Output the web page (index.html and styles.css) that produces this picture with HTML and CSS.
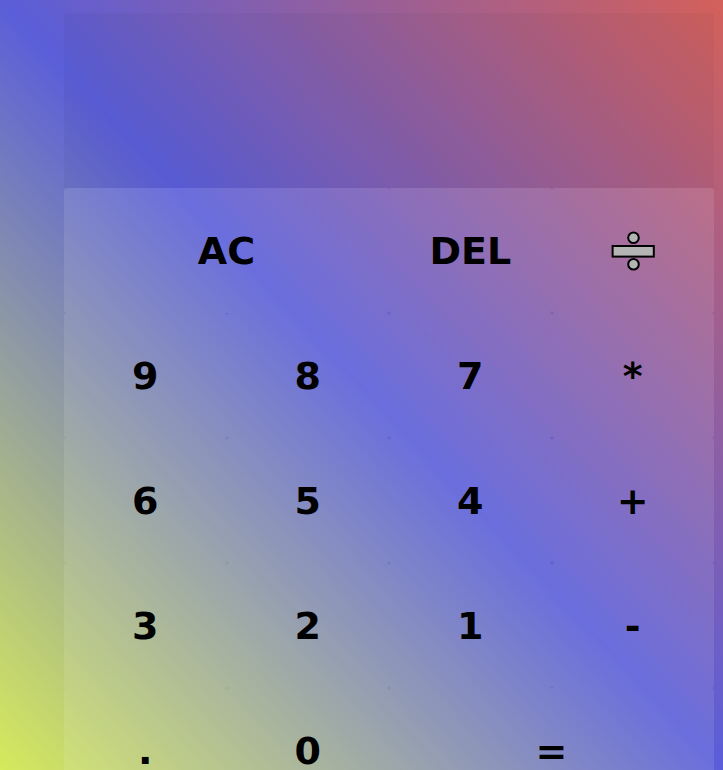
FILE: index.html
```html
<!DOCTYPE html>
<html lang="en">
<head>
<meta charset="utf-8">
<title>Calculator</title>
<link rel="stylesheet" href="styles.css">
</head>
<body>
<div class="calculator">
  <div class="output">
    <div class="previous-operand"></div>
    <div class="current-operand"></div>
  </div>
  <div class="keys">
    <button class="key span-two">AC</button>
    <button class="key">DEL</button>
    <button class="key" aria-label="divide">
      <svg class="divide-icon" width="44" height="40" viewBox="0 0 44 40" aria-hidden="true">
        <circle cx="22.5" cy="6.8" r="5.3" fill="#b4b4b4" stroke="#000" stroke-width="2"/>
        <rect x="1.6" y="15" width="41.2" height="10.6" fill="#b4b4b4" stroke="#000" stroke-width="2"/>
        <circle cx="22.5" cy="33.3" r="5.3" fill="#b4b4b4" stroke="#000" stroke-width="2"/>
      </svg>
    </button>
    <button class="key">9</button>
    <button class="key">8</button>
    <button class="key">7</button>
    <button class="key">*</button>
    <button class="key">6</button>
    <button class="key">5</button>
    <button class="key">4</button>
    <button class="key">+</button>
    <button class="key">3</button>
    <button class="key">2</button>
    <button class="key">1</button>
    <button class="key">-</button>
    <button class="key">.</button>
    <button class="key">0</button>
    <button class="key span-two">=</button>
  </div>
</div>
</body>
</html>
```
FILE: styles.css
```css
html {
  height: 100%;
}

body {
  margin: 0;
  padding: 13px 9px 0 64px;
  background: linear-gradient(to top right, #d6ea5c 0%, #5a5ed9 50%, #d4605a 100%);
  font-family: "DejaVu Sans", Verdana, sans-serif;
}

.calculator {
  width: 650px;
  display: flex;
  flex-direction: column;
}

.output {
  height: 175px;
  background: rgba(0, 0, 0, 0.03);
  border-radius: 3px 3px 0 0;
}

.keys {
  display: grid;
  grid-template-columns: repeat(4, 1fr);
  grid-auto-rows: 125px;
}

.key {
  display: flex;
  align-items: center;
  justify-content: center;
  border: none;
  outline: none;
  margin: 0;
  padding: 0;
  border-radius: 3px;
  background: rgba(255, 255, 255, 0.1);
  color: #000;
  font-family: "DejaVu Sans", Verdana, sans-serif;
  font-weight: bold;
  font-size: 38px;
  cursor: pointer;
}

.span-two {
  grid-column: span 2;
}

.divide-icon {
  display: block;
}
```
